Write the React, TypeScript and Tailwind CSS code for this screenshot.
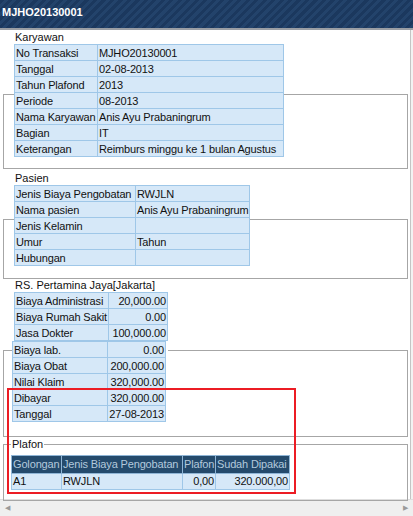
import React from 'react';

const karyawan = [
    ['No Transaksi', 'MJHO20130001'],
    ['Tanggal', '02-08-2013'],
    ['Tahun Plafond', '2013'],
    ['Periode', '08-2013'],
    ['Nama Karyawan', 'Anis Ayu Prabaningrum'],
    ['Bagian', 'IT'],
    ['Keterangan', 'Reimburs minggu ke 1 bulan Agustus'],
];

const pasien = [
    ['Jenis Biaya Pengobatan', 'RWJLN'],
    ['Nama pasien', 'Anis Ayu Prabaningrum'],
    ['Jenis Kelamin', ''],
    ['Umur', 'Tahun'],
    ['Hubungan', ''],
];

const biayaAtas = [
    ['Biaya Administrasi', '20,000.00'],
    ['Biaya Rumah Sakit', '0.00'],
    ['Jasa Dokter', '100,000.00'],
];

const biayaBawah = [
    ['Biaya lab.', '0.00'],
    ['Biaya Obat', '200,000.00'],
    ['Nilai Klaim', '320,000.00'],
    ['Dibayar', '320,000.00'],
    ['Tanggal', '27-08-2013'],
];

const cell = 'h-[16px] border border-[#9fc7e8] bg-[#d6e8f8] pl-[1px] pr-0 leading-[14px] tracking-[-0.15px] whitespace-nowrap overflow-hidden';
const num = 'h-[16px] border border-[#9fc7e8] bg-[#d6e8f8] pl-0 pr-[1px] text-right leading-[14px] tracking-[-0.15px] whitespace-nowrap overflow-hidden';
const head = 'h-[16px] border border-[#8fb5d6] bg-[#244a6c] pl-[1px] pr-0 text-left font-normal tracking-[-0.15px] text-[#b3c9dd] whitespace-nowrap overflow-hidden';

function KeyValueTable({
    rows,
    width,
    first,
    alignRight = false,
    className = '',
}: {
    rows: string[][];
    width: string;
    first: string;
    alignRight?: boolean;
    className?: string;
}) {
    return (
        <table className={`table-fixed border-collapse ${width} ${className}`}>
            <colgroup>
                <col className={first} />
                <col />
            </colgroup>
            <tbody>
                {rows.map(([k, v], i) => (
                    <tr key={i}>
                        <td className={cell}>{k}</td>
                        <td className={alignRight ? num : cell}>{v}</td>
                    </tr>
                ))}
            </tbody>
        </table>
    );
}

const Label = ({ children }: { children: React.ReactNode }) => (
    <div className="h-[13px] leading-[13px] pl-[1px]">{children}</div>
);

export default function App() {
    return (
        <div className="relative w-[413px] h-[516px] overflow-hidden bg-white text-[11px] text-[#111] font-['Liberation_Sans',Arial,sans-serif]">
            {/* title bar */}
            <div className="h-[28px] px-[2px] pt-[4px] text-[11px] font-bold text-white bg-[repeating-linear-gradient(135deg,#1b385e_0px,#1b385e_3px,#23436b_3px,#23436b_6px)]">
                MJHO20130001
            </div>
            <div className="h-[2px] bg-[#9a9ea4]" />

            <div className="flex h-[469px]">
                <div className="w-[410px] pt-[1px]">
                    {/* Karyawan */}
                    <fieldset className="ml-[3px] w-[405px] border border-[#a6a6a6] px-[10px] pb-[11px]">
                        <legend className="p-0">
                            <Label>Karyawan</Label>
                            <KeyValueTable rows={karyawan} width="w-[270px]" first="w-[83px]" />
                        </legend>
                    </fieldset>

                    {/* Pasien */}
                    <fieldset className="ml-[3px] mt-[3px] w-[405px] border border-[#a6a6a6] px-[10px] pb-[12px]">
                        <legend className="p-0">
                            <Label>Pasien</Label>
                            <KeyValueTable rows={pasien} width="w-[236px]" first="w-[121px]" />
                        </legend>
                    </fieldset>

                    {/* Rumah sakit */}
                    <fieldset className="ml-[3px] w-[405px] border border-[#a6a6a6] px-[10px] pb-[14px]">
                        <legend className="p-0">
                            <Label>RS. Pertamina Jaya[Jakarta]</Label>
                            <KeyValueTable rows={biayaAtas} width="w-[154px]" first="w-[94px]" alignRight />
                            <KeyValueTable rows={biayaBawah} width="w-[154px]" first="w-[95px]" alignRight className="-ml-[2px]" />
                        </legend>
                    </fieldset>

                    {/* Plafon */}
                    <fieldset className="ml-[3px] w-[405px] border border-[#a6a6a6] px-[7px] pb-[10px]">
                        <legend className="px-[1px] h-[14px] leading-[14px]">Plafon</legend>
                        <table className="table-fixed border-collapse w-[279px] mt-[4px]">
                            <colgroup>
                                <col className="w-[50px]" />
                                <col className="w-[121px]" />
                                <col className="w-[33px]" />
                                <col />
                            </colgroup>
                            <thead>
                                <tr>
                                    <th className={head}>Golongan</th>
                                    <th className={head}>Jenis Biaya Pengobatan</th>
                                    <th className={head}>Plafon</th>
                                    <th className={head}>Sudah Dipakai</th>
                                </tr>
                            </thead>
                            <tbody>
                                <tr>
                                    <td className={cell}>A1</td>
                                    <td className={cell}>RWJLN</td>
                                    <td className={num}>0,00</td>
                                    <td className={num}>320.000,00</td>
                                </tr>
                            </tbody>
                        </table>
                    </fieldset>
                </div>
                {/* vertical scrollbar edge */}
                <div className="w-[3px] border-l border-[#c4c4c4] bg-[#f2f2f2]" />
            </div>

            {/* horizontal scrollbar */}
            <div className="flex h-[17px] items-center justify-between border-t border-[#dedede] bg-[#efefef] px-[5px] text-[7px] text-[#9a9a9a]">
                <span>◀</span>
                <span>▶</span>
            </div>

            {/* annotation */}
            <div className="absolute left-[7px] top-[388px] h-[106px] w-[289px] border-2 border-[#ec1c24]" />
        </div>
    );
}
